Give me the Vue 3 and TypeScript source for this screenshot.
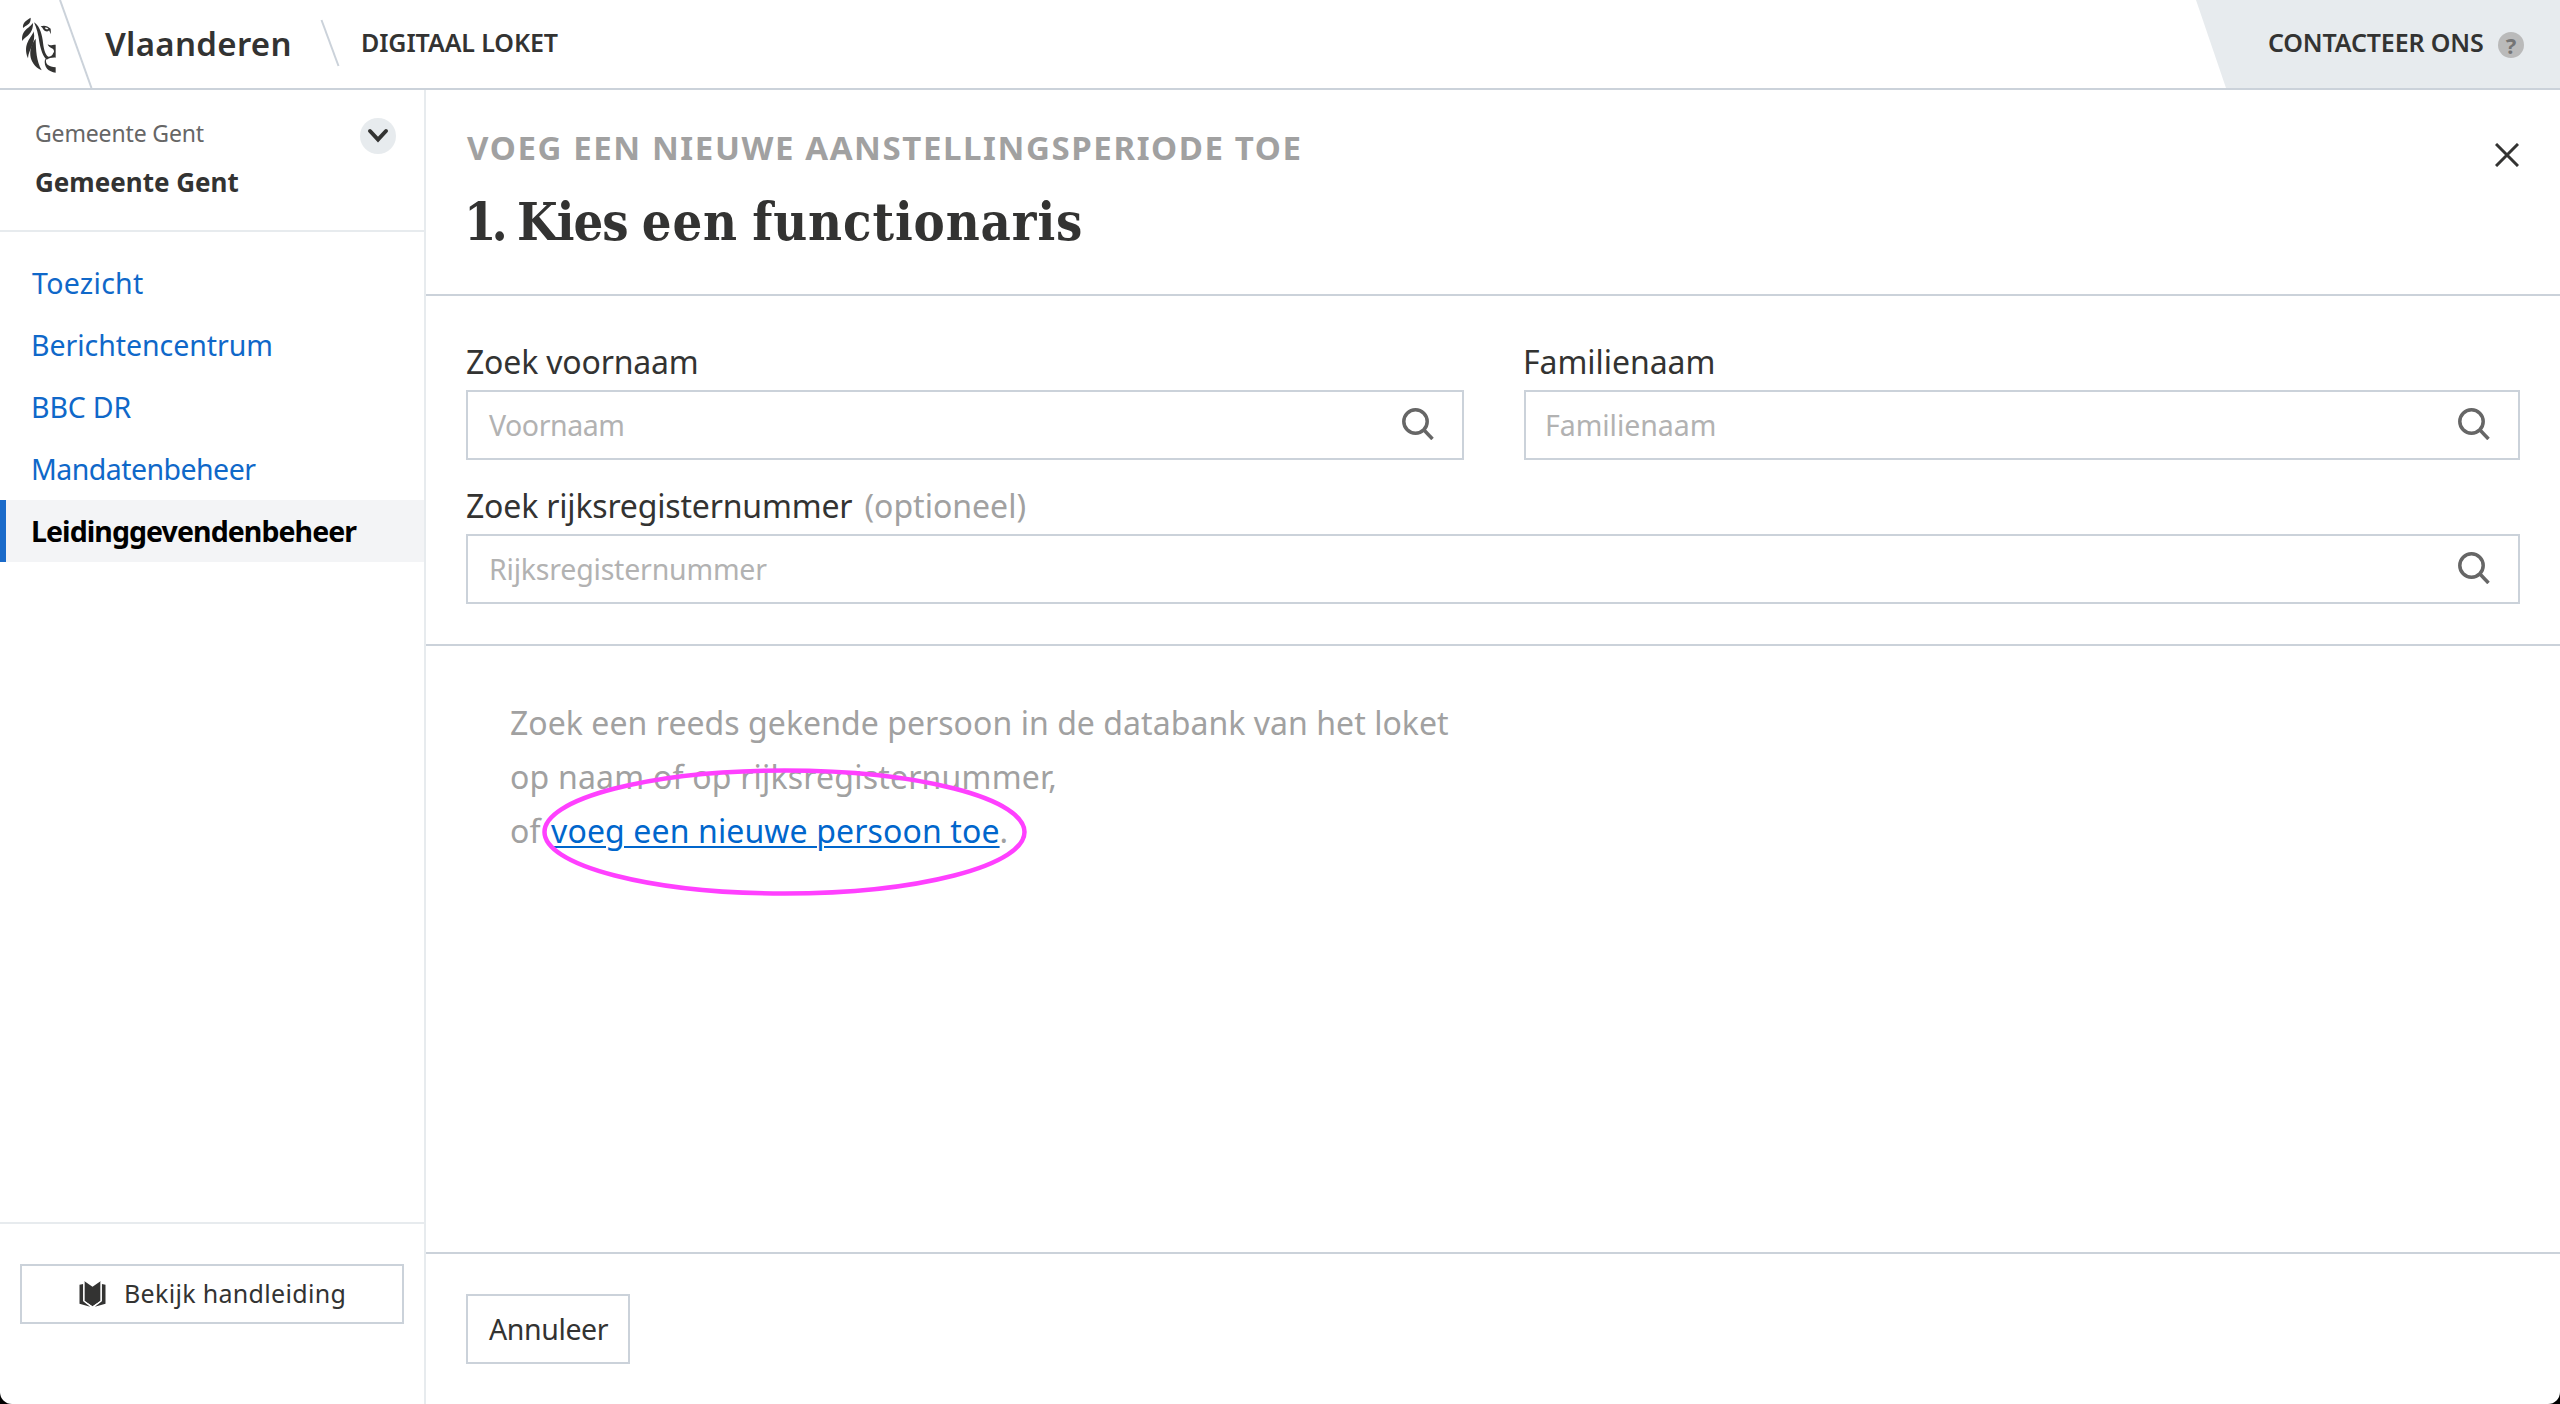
<script setup lang="ts">
interface NavItem {
  label: string
  slug: string
  active?: boolean
}

const navItems: NavItem[] = [
  { label: 'Toezicht', slug: 'toezicht' },
  { label: 'Berichtencentrum', slug: 'berichten' },
  { label: 'BBC DR', slug: 'bbc' },
  { label: 'Mandatenbeheer', slug: 'mandaten' },
  { label: 'Leidinggevendenbeheer', slug: 'leidinggevenden', active: true },
]
</script>

<template>
  <div class="app">
    <header class="topbar">
      <div class="brand">
        <svg class="lion" viewBox="0 0 144 192" aria-hidden="true">
          <path d="M44 17C34 24 19 30 21 48C28 40 46 38 44 17Z" />
          <path d="M51 32C42 48 14 54 19 87C28 72 52 68 51 32Z" />
          <path d="M53 58C48 76 18 96 36 139C37 112 61 96 53 58Z" />
          <path d="M59 80C36 108 34 154 77 175C61 146 60 116 59 80Z" />
          <path d="M54 31C68 40 76 58 80 84C83 108 86 128 97 134C104 134 110 130 112 122C116 122 114 112 110 110C102 108 96 102 95 97C104 102 108 98 119 98V137C108 136 99 139 92 143C80 132 74 112 70 90C67 68 62 48 54 31Z" />
          <path d="M90 142C88 158 98 164 119 166V182C98 180 82 166 87 142Z" />
          <path fill-rule="evenodd" d="M74 43C84 39 94 41 104 50L105 67L99 55C97 61 85 60 79 47L74 43ZM87 47C88 52 95 53 97 50C94 47 90 46 87 47Z" />
        </svg>
        <svg class="divider" viewBox="0 0 34 88" aria-hidden="true"><path d="M1 0L32.500 88" /></svg>
        <span class="brand-name">Vlaanderen</span>
        <svg class="slash" viewBox="0 0 20 48" aria-hidden="true"><path d="M1.500 1L18.500 47" /></svg>
        <span class="app-name">DIGITAAL LOKET</span>
      </div>
      <div class="contact">
        <span>CONTACTEER ONS</span>
        <i class="help-badge">?</i>
      </div>
    </header>

    <div class="body">
      <aside class="sidebar">
        <div class="unit">
          <div>
            <div class="unit-type">Gemeente Gent</div>
            <div class="unit-name">Gemeente Gent</div>
          </div>
          <button class="unit-toggle" aria-label="Wissel">
            <svg viewBox="0 0 36 36"><path d="M10 13L18 21.500L26 13" /></svg>
          </button>
        </div>
        <nav class="nav">
          <a v-for="item in navItems" :key="item.slug" :class="['nav-item', item.slug, { active: item.active }]">{{ item.label }}</a>
        </nav>
        <div class="sidebar-foot">
          <button class="btn manual">
            <svg viewBox="29 27 80 78" aria-hidden="true">
              <path d="M45 28L69 44L93 28V86L69 103L45 86Z" />
              <path d="M30 38L41 36V88L62 104L30 95Z" />
              <path d="M108 38L97 36V88L76 104L108 95Z" />
              <path class="gap" d="M43 30V87L69 105L95 87V30" />
            </svg>
            <span>Bekijk handleiding</span>
          </button>
        </div>
      </aside>

      <main class="main">
        <section class="title-block">
          <div>
            <h2>VOEG EEN NIEUWE AANSTELLINGSPERIODE TOE</h2>
            <h1><span class="step">1.</span> <span class="verb">Kies</span> een functionaris</h1>
          </div>
          <svg class="close" viewBox="0 0 24 24" aria-hidden="true"><path d="M1 1L23 23M23 1L1 23" /></svg>
        </section>

        <section class="search">
          <div class="field">
            <label class="l-first">Zoek voornaam</label>
            <div class="input p-first">
              <span>Voornaam</span>
              <svg viewBox="0 0 32 32"><circle cx="13.500" cy="13.500" r="11.700" /><path d="M21.500 21.500L30.500 31" /></svg>
            </div>
          </div>
          <div class="field">
            <label class="l-last">Familienaam</label>
            <div class="input p-last">
              <span>Familienaam</span>
              <svg viewBox="0 0 32 32"><circle cx="13.500" cy="13.500" r="11.700" /><path d="M21.500 21.500L30.500 31" /></svg>
            </div>
          </div>
          <div class="field wide">
            <label class="l-rrn">Zoek rijksregisternummer <small>(optioneel)</small></label>
            <div class="input p-rrn">
              <span>Rijksregisternummer</span>
              <svg viewBox="0 0 32 32"><circle cx="13.500" cy="13.500" r="11.700" /><path d="M21.500 21.500L30.500 31" /></svg>
            </div>
          </div>
        </section>

        <section class="hint">
          <p class="h1">Zoek een reeds gekende persoon in de databank van het loket</p>
          <p class="h2">op naam of op rijksregisternummer,</p>
          <p class="h3">of <a>voeg een nieuwe persoon toe</a>.</p>
          <svg class="marker" viewBox="0 0 485 128" aria-hidden="true"><ellipse cx="242.500" cy="64" rx="240" ry="61.500" /></svg>
        </section>

        <footer class="actions">
          <button class="btn cancel">Annuleer</button>
        </footer>
      </main>
    </div>
  </div>
</template>

<style>
body { background: #000; }
</style>

<style scoped>
* { box-sizing: border-box; }
.app {
  height: 1404px;
  display: flex;
  flex-direction: column;
  overflow: hidden;
  background: #fff;
  border-radius: 0 0 12px 12px;
  color: #333332;
  font-family: 'Noto Sans', sans-serif;
}
button { font-family: inherit; color: inherit; padding: 0; }
svg { display: block; flex: none; }

.topbar {
  height: 90px;
  flex: none;
  display: flex;
  justify-content: space-between;
  border-bottom: 2px solid #cbd2da;
}
.brand { display: flex; align-items: flex-start; }
.lion { width: 48px; height: 64px; margin: 12px 0 0 16px; fill: #333332; }
.divider { width: 34px; height: 88px; margin-left: -5px; }
.divider path, .slash path { fill: none; stroke: #cbd2da; stroke-width: 2; }
.brand-name {
  margin-left: 12px;
  width: 215px;
  font-size: 33px;
  font-weight: 600;
  line-height: 87px;
  letter-spacing: 0.3px;
}
.slash { width: 20px; height: 48px; margin-top: 19px; }
.app-name {
  margin-left: 21px;
  font-size: 25px;
  font-weight: 600;
  line-height: 85px;
  letter-spacing: -0.1px;
}
.contact {
  width: 364px;
  height: 88px;
  padding-left: 72px;
  display: flex;
  background: #e7ebee;
  clip-path: polygon(0 0, 100% 0, 100% 100%, 30px 100%);
  font-size: 25px;
  font-weight: 600;
  line-height: 85px;
  letter-spacing: -0.15px;
}
.help-badge {
  width: 26px;
  height: 26px;
  margin: 32px 36px 0 auto;
  border-radius: 50%;
  background: #bababa;
  color: #757575;
  font-size: 22px;
  font-style: normal;
  font-weight: 700;
  line-height: 26px;
  letter-spacing: 0;
  text-align: center;
}

.body { flex: 1; display: flex; min-height: 0; }
.sidebar {
  width: 426px;
  flex: none;
  display: flex;
  flex-direction: column;
  border-right: 2px solid #e7ebee;
}
.unit {
  height: 142px;
  flex: none;
  display: flex;
  justify-content: space-between;
  padding: 25px 28px 0 35px;
  border-bottom: 2px solid #e7ebee;
}
.unit-type { font-size: 23px; line-height: 36px; color: #666; letter-spacing: -0.15px; }
.unit-name { margin-top: 13px; font-size: 26px; font-weight: 700; line-height: 36px; }
.unit-toggle {
  width: 36px;
  height: 36px;
  margin-top: 3px;
  border: 0;
  border-radius: 50%;
  background: #e7ebee;
}
.unit-toggle path { fill: none; stroke: #333332; stroke-width: 4; stroke-linecap: round; }
.nav { flex: 1; padding-top: 20px; }
.nav-item {
  display: block;
  height: 62px;
  padding-left: 31px;
  font-size: 28.5px;
  line-height: 62px;
  color: #0f68c9;
}
.toezicht { padding-left: 32px; letter-spacing: 0.3px; }
.berichten { letter-spacing: -0.05px; }
.bbc { letter-spacing: -0.15px; }
.mandaten { letter-spacing: -0.55px; }
.nav-item.active {
  padding-left: 25px;
  border-left: 6px solid #1a6ac9;
  background: #f3f4f6;
  color: #000;
  font-weight: 700;
  letter-spacing: -0.93px;
}
.sidebar-foot { height: 182px; flex: none; padding: 40px 20px 0; border-top: 2px solid #e7ebee; }
.btn { border: 2px solid #cbd2da; background: #fff; display: flex; align-items: center; }
.manual {
  width: 384px;
  height: 60px;
  padding-left: 57px;
  font-size: 25px;
  letter-spacing: 0.32px;
}
.manual svg { width: 27px; height: 26px; fill: #333332; }
.manual .gap { fill: none; stroke: #fff; stroke-width: 3; }
.manual span { margin: -2px 0 0 18px; white-space: nowrap; }

.main { flex: 1; display: flex; flex-direction: column; }
.title-block {
  height: 206px;
  flex: none;
  display: flex;
  justify-content: space-between;
  padding: 38px 41px 0 41px;
  border-bottom: 2px solid #cbd2da;
}
h2 {
  margin: 0;
  font-size: 33px;
  font-weight: 700;
  line-height: 40px;
  letter-spacing: 1.6px;
  color: #a1a1a1;
}
h1 {
  margin: 24px 0 0 -3px;
  font-family: 'DejaVu Serif Condensed', 'DejaVu Serif', serif;
  font-size: 52px;
  font-weight: 700;
  line-height: 60px;
  letter-spacing: 0.9px;
  word-spacing: -3px;
}
.step { letter-spacing: -5px; }
.verb { letter-spacing: -1px; }
.close { width: 24px; height: 24px; margin-top: 15px; }
.close path { stroke: #333332; stroke-width: 3; fill: none; }

.search {
  height: 350px;
  flex: none;
  display: grid;
  grid-template-columns: 998px 1fr;
  column-gap: 60px;
  row-gap: 24px;
  align-content: start;
  padding: 44px 40px 0;
  border-bottom: 2px solid #cbd2da;
}
.wide { grid-column: 1 / -1; }
.field label { display: block; margin-bottom: 6px; font-size: 32px; line-height: 44px; }
.field small { margin-left: 4px; font-size: 32px; color: #a1a1a1; letter-spacing: 0; }
.l-first, .l-rrn { letter-spacing: -0.18px; }
.l-last { margin-left: -1px; letter-spacing: -0.05px; }
.input {
  height: 70px;
  display: flex;
  align-items: center;
  justify-content: space-between;
  padding: 0 28px 0 21px;
  border: 2px solid #cbd2da;
  font-size: 28.5px;
  color: #b2b2b2;
}
.input svg { width: 32px; height: 32px; margin-top: -2px; }
.input circle, .input path { fill: none; stroke: #666; stroke-width: 3.5; }
.p-first { letter-spacing: -0.45px; }
.p-last { padding-left: 19px; letter-spacing: -0.05px; }
.p-rrn { letter-spacing: -0.2px; }

.hint { position: relative; flex: 1; padding: 50px 0 0 84px; font-size: 32px; line-height: 54px; color: #a1a1a1; }
.hint p { margin: 0; }
.h1 { letter-spacing: 0.05px; }
.h2 { letter-spacing: 0.2px; }
.h3 { letter-spacing: 0.12px; }
.hint a {
  margin-left: 2px;
  color: #0066cc;
  text-decoration: underline;
  text-decoration-thickness: 2px;
  text-underline-offset: 3px;
}
.marker { position: absolute; left: 116px; top: 122px; width: 485px; height: 128px; }
.marker ellipse { fill: none; stroke: #ff40ff; stroke-width: 4.5; }

.actions { height: 152px; flex: none; padding: 40px; border-top: 2px solid #cbd2da; }
.cancel {
  width: 164px;
  height: 70px;
  padding-left: 21px;
  font-size: 28.5px;
  letter-spacing: -0.4px;
}
</style>
